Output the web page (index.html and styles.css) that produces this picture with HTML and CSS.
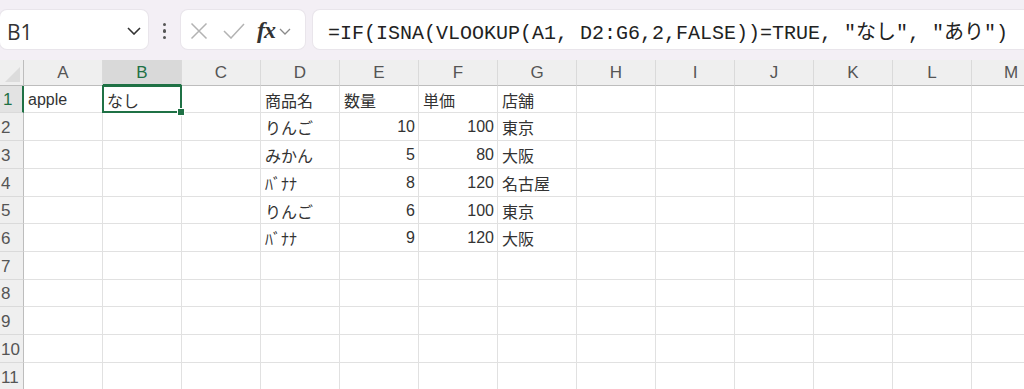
FILE: index.html
```html
<!DOCTYPE html>
<html lang="ja">
<head>
<meta charset="utf-8">
<link rel="stylesheet" href="styles.css">
</head>
<body>
<div class="app">
  <div class="toolbar">
    <div class="namebox">
      <span class="nb-text">B1</span>
      <svg class="nb-chev" width="14" height="8" viewBox="0 0 14 8"><path d="M1 1 L7 7 L13 1" fill="none" stroke="#333" stroke-width="1.6"/></svg>
    </div>
    <div class="dots"><i></i><i></i><i></i></div>
    <div class="fbtns">
      <svg class="ic-x" width="18" height="18" viewBox="0 0 18 18"><path d="M1.5 1.5 L16.5 16.5 M16.5 1.5 L1.5 16.5" stroke="#b3b3b3" stroke-width="1.5" fill="none"/></svg>
      <svg class="ic-check" width="22" height="16" viewBox="0 0 22 16"><path d="M1 8 L8 15 L21 1" stroke="#b3b3b3" stroke-width="1.5" fill="none"/></svg>
      <span class="fx">fx</span>
      <svg class="ic-chev" width="12" height="7" viewBox="0 0 12 7"><path d="M1 1 L6 6 L11 1" fill="none" stroke="#8a8a8a" stroke-width="1.3"/></svg>
    </div>
    <div class="finput"><span class="ftext">=IF(ISNA(VLOOKUP(A1, D2:G6,2,FALSE))=TRUE, "なし", "あり")</span></div>
  </div>
  <div class="sheet">
    <div class="corner"></div>
    <div class="ch">A</div><div class="ch sel">B</div><div class="ch">C</div><div class="ch">D</div><div class="ch">E</div><div class="ch">F</div><div class="ch">G</div><div class="ch">H</div><div class="ch">I</div><div class="ch">J</div><div class="ch">K</div><div class="ch">L</div><div class="ch">M</div>

    <div class="rh sel">1</div>
    <div class="c">apple</div><div class="c active">なし<div class="selbox"><div class="handle"></div></div></div><div class="c"></div><div class="c">商品名</div><div class="c">数量</div><div class="c">単価</div><div class="c">店舗</div><div class="c"></div><div class="c"></div><div class="c"></div><div class="c"></div><div class="c"></div><div class="c"></div>

    <div class="rh">2</div>
    <div class="c"></div><div class="c"></div><div class="c"></div><div class="c">りんご</div><div class="c n">10</div><div class="c n">100</div><div class="c">東京</div><div class="c"></div><div class="c"></div><div class="c"></div><div class="c"></div><div class="c"></div><div class="c"></div>

    <div class="rh">3</div>
    <div class="c"></div><div class="c"></div><div class="c"></div><div class="c">みかん</div><div class="c n">5</div><div class="c n">80</div><div class="c">大阪</div><div class="c"></div><div class="c"></div><div class="c"></div><div class="c"></div><div class="c"></div><div class="c"></div>

    <div class="rh">4</div>
    <div class="c"></div><div class="c"></div><div class="c"></div><div class="c">ﾊﾞﾅﾅ</div><div class="c n">8</div><div class="c n">120</div><div class="c">名古屋</div><div class="c"></div><div class="c"></div><div class="c"></div><div class="c"></div><div class="c"></div><div class="c"></div>

    <div class="rh">5</div>
    <div class="c"></div><div class="c"></div><div class="c"></div><div class="c">りんご</div><div class="c n">6</div><div class="c n">100</div><div class="c">東京</div><div class="c"></div><div class="c"></div><div class="c"></div><div class="c"></div><div class="c"></div><div class="c"></div>

    <div class="rh">6</div>
    <div class="c"></div><div class="c"></div><div class="c"></div><div class="c">ﾊﾞﾅﾅ</div><div class="c n">9</div><div class="c n">120</div><div class="c">大阪</div><div class="c"></div><div class="c"></div><div class="c"></div><div class="c"></div><div class="c"></div><div class="c"></div>

    <div class="rh">7</div>
    <div class="c"></div><div class="c"></div><div class="c"></div><div class="c"></div><div class="c"></div><div class="c"></div><div class="c"></div><div class="c"></div><div class="c"></div><div class="c"></div><div class="c"></div><div class="c"></div><div class="c"></div>

    <div class="rh">8</div>
    <div class="c"></div><div class="c"></div><div class="c"></div><div class="c"></div><div class="c"></div><div class="c"></div><div class="c"></div><div class="c"></div><div class="c"></div><div class="c"></div><div class="c"></div><div class="c"></div><div class="c"></div>

    <div class="rh">9</div>
    <div class="c"></div><div class="c"></div><div class="c"></div><div class="c"></div><div class="c"></div><div class="c"></div><div class="c"></div><div class="c"></div><div class="c"></div><div class="c"></div><div class="c"></div><div class="c"></div><div class="c"></div>

    <div class="rh">10</div>
    <div class="c"></div><div class="c"></div><div class="c"></div><div class="c"></div><div class="c"></div><div class="c"></div><div class="c"></div><div class="c"></div><div class="c"></div><div class="c"></div><div class="c"></div><div class="c"></div><div class="c"></div>

    <div class="rh">11</div>
    <div class="c"></div><div class="c"></div><div class="c"></div><div class="c"></div><div class="c"></div><div class="c"></div><div class="c"></div><div class="c"></div><div class="c"></div><div class="c"></div><div class="c"></div><div class="c"></div><div class="c"></div>
  </div>
</div>
</body>
</html>
```

FILE: styles.css
```css
* { box-sizing: border-box; }
html, body { margin: 0; padding: 0; }
body {
  width: 1024px;
  height: 389px;
  overflow: hidden;
  background: #ffffff;
  font-family: "Liberation Sans", "Noto Sans CJK JP", sans-serif;
}
.app { width: 1024px; height: 389px; overflow: hidden; }

.toolbar {
  height: 60px;
  background: #f3eff5;
  display: flex;
  align-items: flex-start;
  padding-top: 10px;
  overflow: hidden;
}
.namebox {
  flex: none;
  width: 148px;
  height: 39px;
  background: #fff;
  border-radius: 7px;
  box-shadow: 0 0 0 1px #e9e5eb;
  display: flex;
  align-items: center;
  padding-left: 7px;
  padding-right: 7px;
}
.nb-text {
  font-family: "Open Sans", "Noto Sans", sans-serif;
  font-size: 21px;
  color: #333;
  flex: 1;
  padding-top: 4px;
}
.nb-chev { margin-top: 2px; }
.dots {
  flex: none;
  width: 33px;
  height: 39px;
  display: flex;
  flex-direction: column;
  align-items: center;
  justify-content: center;
  gap: 3px;
  padding-top: 3px;
}
.dots i {
  display: block;
  width: 3.5px;
  height: 3.5px;
  border-radius: 50%;
  background: #555;
}
.fbtns {
  flex: none;
  width: 124px;
  height: 39px;
  background: #fff;
  border-radius: 7px;
  box-shadow: 0 0 0 1px #e9e5eb;
  display: flex;
  align-items: center;
  padding-left: 8px;
}
.ic-x { margin-left: 1px; margin-top: 3px; }
.ic-check { margin-left: 15px; margin-top: 3px; }
.fx {
  font-family: "Liberation Serif", "DejaVu Serif", serif;
  font-style: italic;
  font-weight: bold;
  font-size: 24px;
  color: #333;
  margin-left: 12px;
  letter-spacing: -1px;
  padding-top: 1px;
}
.ic-chev { margin-left: 4px; margin-top: 3px; }
.finput {
  flex: none;
  width: 730px;
  height: 39px;
  margin-left: 8px;
  background: #fff;
  border-radius: 7px;
  box-shadow: 0 0 0 1px #e9e5eb;
  display: flex;
  align-items: center;
  padding-left: 15px;
  white-space: nowrap;
}
.ftext {
  font-family: "Liberation Mono", "Noto Sans CJK JP", monospace;
  font-size: 20px;
  color: #222;
  padding-top: 2px;
}

.sheet {
  display: grid;
  grid-template-columns: 24px repeat(13, 79px);
  grid-template-rows: 26px 27px 28px 28px 28px 27px 28px 28px 27px 28px 28px 28px;
  width: 1051px;
  background: #fff;
}
.corner {
  background: #efefef;
  border-right: 1px solid #bdbdbd;
  border-bottom: 1px solid #bdbdbd;
  position: relative;
  overflow: hidden;
}
.corner::after {
  content: "";
  position: absolute;
  right: 3px;
  bottom: 3px;
  width: 0;
  height: 0;
  border-left: 15px solid transparent;
  border-bottom: 15px solid #dcdcdc;
}
.ch {
  background: #efefef;
  border-right: 1px solid #dadada;
  border-bottom: 1px solid #bdbdbd;
  display: flex;
  align-items: center;
  justify-content: center;
  font-size: 17px;
  color: #555;
  padding-top: 1px;
}
.ch.sel {
  background: #d9d9d9;
  color: #1f7145;
  border-bottom: 2px solid #1f7145;
}
.rh {
  background: #efefef;
  border-right: 1px solid #bdbdbd;
  border-bottom: 1px solid #dadada;
  display: flex;
  align-items: center;
  padding-left: 1px;
  font-size: 17px;
  color: #555;
  padding-top: 2px;
  overflow: visible;
  white-space: nowrap;
}
.rh.sel {
  color: #1f7145;
  border-right: 2px solid #1f7145;
  background: #e3e3e3;
  padding-left: 3px;
}
.c {
  border-right: 1px solid #e1e1e1;
  border-bottom: 1px solid #e1e1e1;
  display: flex;
  align-items: center;
  padding: 1px 3px 0 4px;
  font-size: 16px;
  color: #333;
  white-space: nowrap;
}
.c.n { justify-content: flex-end; }
.c.active { position: relative; }
.selbox {
  position: absolute;
  left: -1px;
  top: -1px;
  right: -1px;
  bottom: -1px;
  border: 2px solid #1f7145;
}
.handle {
  position: absolute;
  right: -5px;
  bottom: -5px;
  width: 8px;
  height: 8px;
  background: #1f7145;
  border: 1px solid #fff;
}
```
